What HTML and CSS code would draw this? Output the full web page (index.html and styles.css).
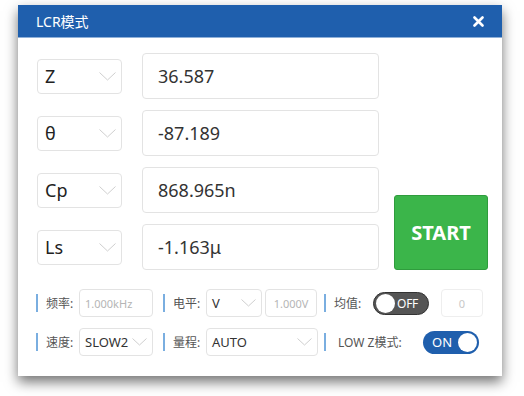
FILE: index.html
```html
<!DOCTYPE html>
<html lang="zh">
<head>
    <meta charset="UTF-8">
    <meta name="viewport" content="width=device-width, initial-scale=1.0">
    <title>LCR模式</title>
    <link rel="stylesheet" href="styles.css">
</head>
<body>
    <div class="dialog">
        <div class="dialog-header">
            <span class="dialog-title">LCR模式</span>
            <svg class="close-icon" width="11" height="11" viewBox="0 0 11 11">
                <path d="M1.5 1.5 L9.5 9.5 M9.5 1.5 L1.5 9.5" stroke="#fff" stroke-width="2.6" stroke-linecap="round"/>
            </svg>
        </div>

        <div class="dialog-body">
            <div class="main">
                <div class="readings">
                    <div class="reading-row">
                        <div class="select big">Z
                            <svg class="chevron" width="17" height="9" viewBox="0 0 17 9"><polyline points="0.5,0.5 8.5,8 16.5,0.5" fill="none" stroke="#cfcfcf" stroke-width="1"/></svg>
                        </div>
                        <div class="value-box">36.587</div>
                    </div>
                    <div class="reading-row">
                        <div class="select big">θ
                            <svg class="chevron" width="17" height="9" viewBox="0 0 17 9"><polyline points="0.5,0.5 8.5,8 16.5,0.5" fill="none" stroke="#cfcfcf" stroke-width="1"/></svg>
                        </div>
                        <div class="value-box">-87.189</div>
                    </div>
                    <div class="reading-row">
                        <div class="select big">Cp
                            <svg class="chevron" width="17" height="9" viewBox="0 0 17 9"><polyline points="0.5,0.5 8.5,8 16.5,0.5" fill="none" stroke="#cfcfcf" stroke-width="1"/></svg>
                        </div>
                        <div class="value-box">868.965n</div>
                    </div>
                    <div class="reading-row">
                        <div class="select big">Ls
                            <svg class="chevron" width="17" height="9" viewBox="0 0 17 9"><polyline points="0.5,0.5 8.5,8 16.5,0.5" fill="none" stroke="#cfcfcf" stroke-width="1"/></svg>
                        </div>
                        <div class="value-box">-1.163μ</div>
                    </div>
                </div>
                <button class="start-button">START</button>
            </div>

            <div class="settings">
                <div class="settings-row">
                    <div class="group g1">
                        <span class="bar"></span>
                        <span class="label">频率:</span>
                        <div class="field w74 muted">1.000kHz</div>
                    </div>
                    <div class="group g2">
                        <span class="bar"></span>
                        <span class="label">电平:</span>
                        <div class="field select-small w56">V
                            <svg class="chevron" width="15" height="8" viewBox="0 0 15 8"><polyline points="0.5,0.5 7.5,7 14.5,0.5" fill="none" stroke="#cfcfcf" stroke-width="1"/></svg>
                        </div>
                        <div class="field w52 muted center">1.000V</div>
                    </div>
                    <div class="group g3">
                        <span class="bar"></span>
                        <span class="label wide">均值:</span>
                        <div class="toggle off"><span class="knob"></span><span class="toggle-text">OFF</span></div>
                        <div class="field w42 muted center faint">0</div>
                    </div>
                </div>
                <div class="settings-row">
                    <div class="group g1">
                        <span class="bar"></span>
                        <span class="label">速度:</span>
                        <div class="field select-small w74">SLOW2
                            <svg class="chevron" width="15" height="8" viewBox="0 0 15 8"><polyline points="0.5,0.5 7.5,7 14.5,0.5" fill="none" stroke="#cfcfcf" stroke-width="1"/></svg>
                        </div>
                    </div>
                    <div class="group g2">
                        <span class="bar"></span>
                        <span class="label">量程:</span>
                        <div class="field select-small w112">AUTO
                            <svg class="chevron" width="15" height="8" viewBox="0 0 15 8"><polyline points="0.5,0.5 7.5,7 14.5,0.5" fill="none" stroke="#cfcfcf" stroke-width="1"/></svg>
                        </div>
                    </div>
                    <div class="group g3">
                        <span class="bar"></span>
                        <span class="label lowz">LOW Z模式:</span>
                        <div class="toggle on"><span class="toggle-text">ON</span><span class="knob"></span></div>
                    </div>
                </div>
            </div>
        </div>
    </div>
</body>
</html>
```

FILE: styles.css
```css
body {
    margin: 0;
    padding: 5px 0 20px 18px;
    background-color: #fff;
    font-family: "Noto Sans", "Noto Sans CJK SC", sans-serif;
    color: #333;
}

.dialog {
    width: 484px;
    height: 371px;
    background-color: #fff;
    box-shadow: 0 6px 12px rgba(0, 0, 0, 0.55);
    display: flex;
    flex-direction: column;
}

.dialog-header {
    height: 32px;
    background-color: #1f5fad;
    border-bottom: 1px solid #8fb0d8;
    color: #fff;
    display: flex;
    align-items: center;
    justify-content: space-between;
    padding: 0 18px;
}

.dialog-title {
    font-size: 14px;
}

.dialog-body {
    padding: 15px 14px 0 19px;
}

.main {
    display: flex;
    align-items: flex-end;
}

.readings {
    display: flex;
    flex-direction: column;
    gap: 11px;
}

.reading-row {
    display: flex;
    align-items: center;
}

.select {
    box-sizing: border-box;
    border: 1px solid #e3e3e3;
    border-radius: 4px;
    display: flex;
    align-items: center;
    justify-content: space-between;
}

.select.big {
    width: 85px;
    height: 35px;
    padding: 0 5px 0 7px;
    font-size: 18px;
    color: #222;
}

.value-box {
    box-sizing: border-box;
    width: 237px;
    height: 46px;
    margin-left: 20px;
    padding-left: 15px;
    border: 1px solid #e3e3e3;
    border-radius: 4px;
    display: flex;
    align-items: center;
    font-size: 18px;
    color: #333;
}

.start-button {
    width: 94px;
    height: 75px;
    margin-left: 15px;
    background-color: #3bb54a;
    border: 1px solid #2f9c3d;
    border-radius: 3px;
    color: #fff;
    font-family: inherit;
    font-size: 20px;
    font-weight: bold;
    padding: 0;
}

.settings {
    margin-top: 19px;
    margin-left: -1px;
    display: flex;
    flex-direction: column;
    gap: 11px;
}

.settings-row {
    display: flex;
    align-items: center;
    height: 28px;
}

.group {
    display: flex;
    align-items: center;
}

.group.g1 { width: 127px; }
.group.g2 { width: 161px; }

.bar {
    width: 2px;
    height: 18px;
    background-color: #7aaee0;
    margin-right: 8px;
}

.label {
    width: 33px;
    font-size: 12px;
    color: #555;
}

.label.wide { width: 39px; }

.label.lowz {
    width: 85px;
    margin-left: 4px;
}

.field {
    box-sizing: border-box;
    height: 28px;
    border: 1px solid #e3e3e3;
    border-radius: 4px;
    display: flex;
    align-items: center;
    padding: 0 5px;
    font-size: 13px;
    color: #333;
}

.field.muted {
    font-size: 11px;
    color: #b5b5b5;
}

.field.faint {
    border-color: #eeeeee;
    color: #c8c8c8;
}

.field.center {
    justify-content: center;
}

.select-small {
    justify-content: space-between;
}

.w42 { width: 42px; margin-left: 12px; }
.w52 { width: 52px; margin-left: 3px; }
.w56 { width: 56px; }
.w74 { width: 74px; }
.w112 { width: 112px; }

.toggle {
    box-sizing: border-box;
    width: 56px;
    height: 23px;
    border-radius: 12px;
    display: flex;
    align-items: center;
    justify-content: space-between;
    padding: 0 2px;
    color: #fff;
    font-size: 12px;
}

.toggle.off {
    background-color: #555;
    border: 1px solid #333;
}

.toggle.on {
    background-color: #1f5fad;
    padding-left: 9px;
    font-size: 13px;
}

.toggle.off .toggle-text {
    margin-right: 8px;
    letter-spacing: -0.3px;
}

.knob {
    width: 19px;
    height: 19px;
    border-radius: 50%;
    background-color: #fff;
}
```
